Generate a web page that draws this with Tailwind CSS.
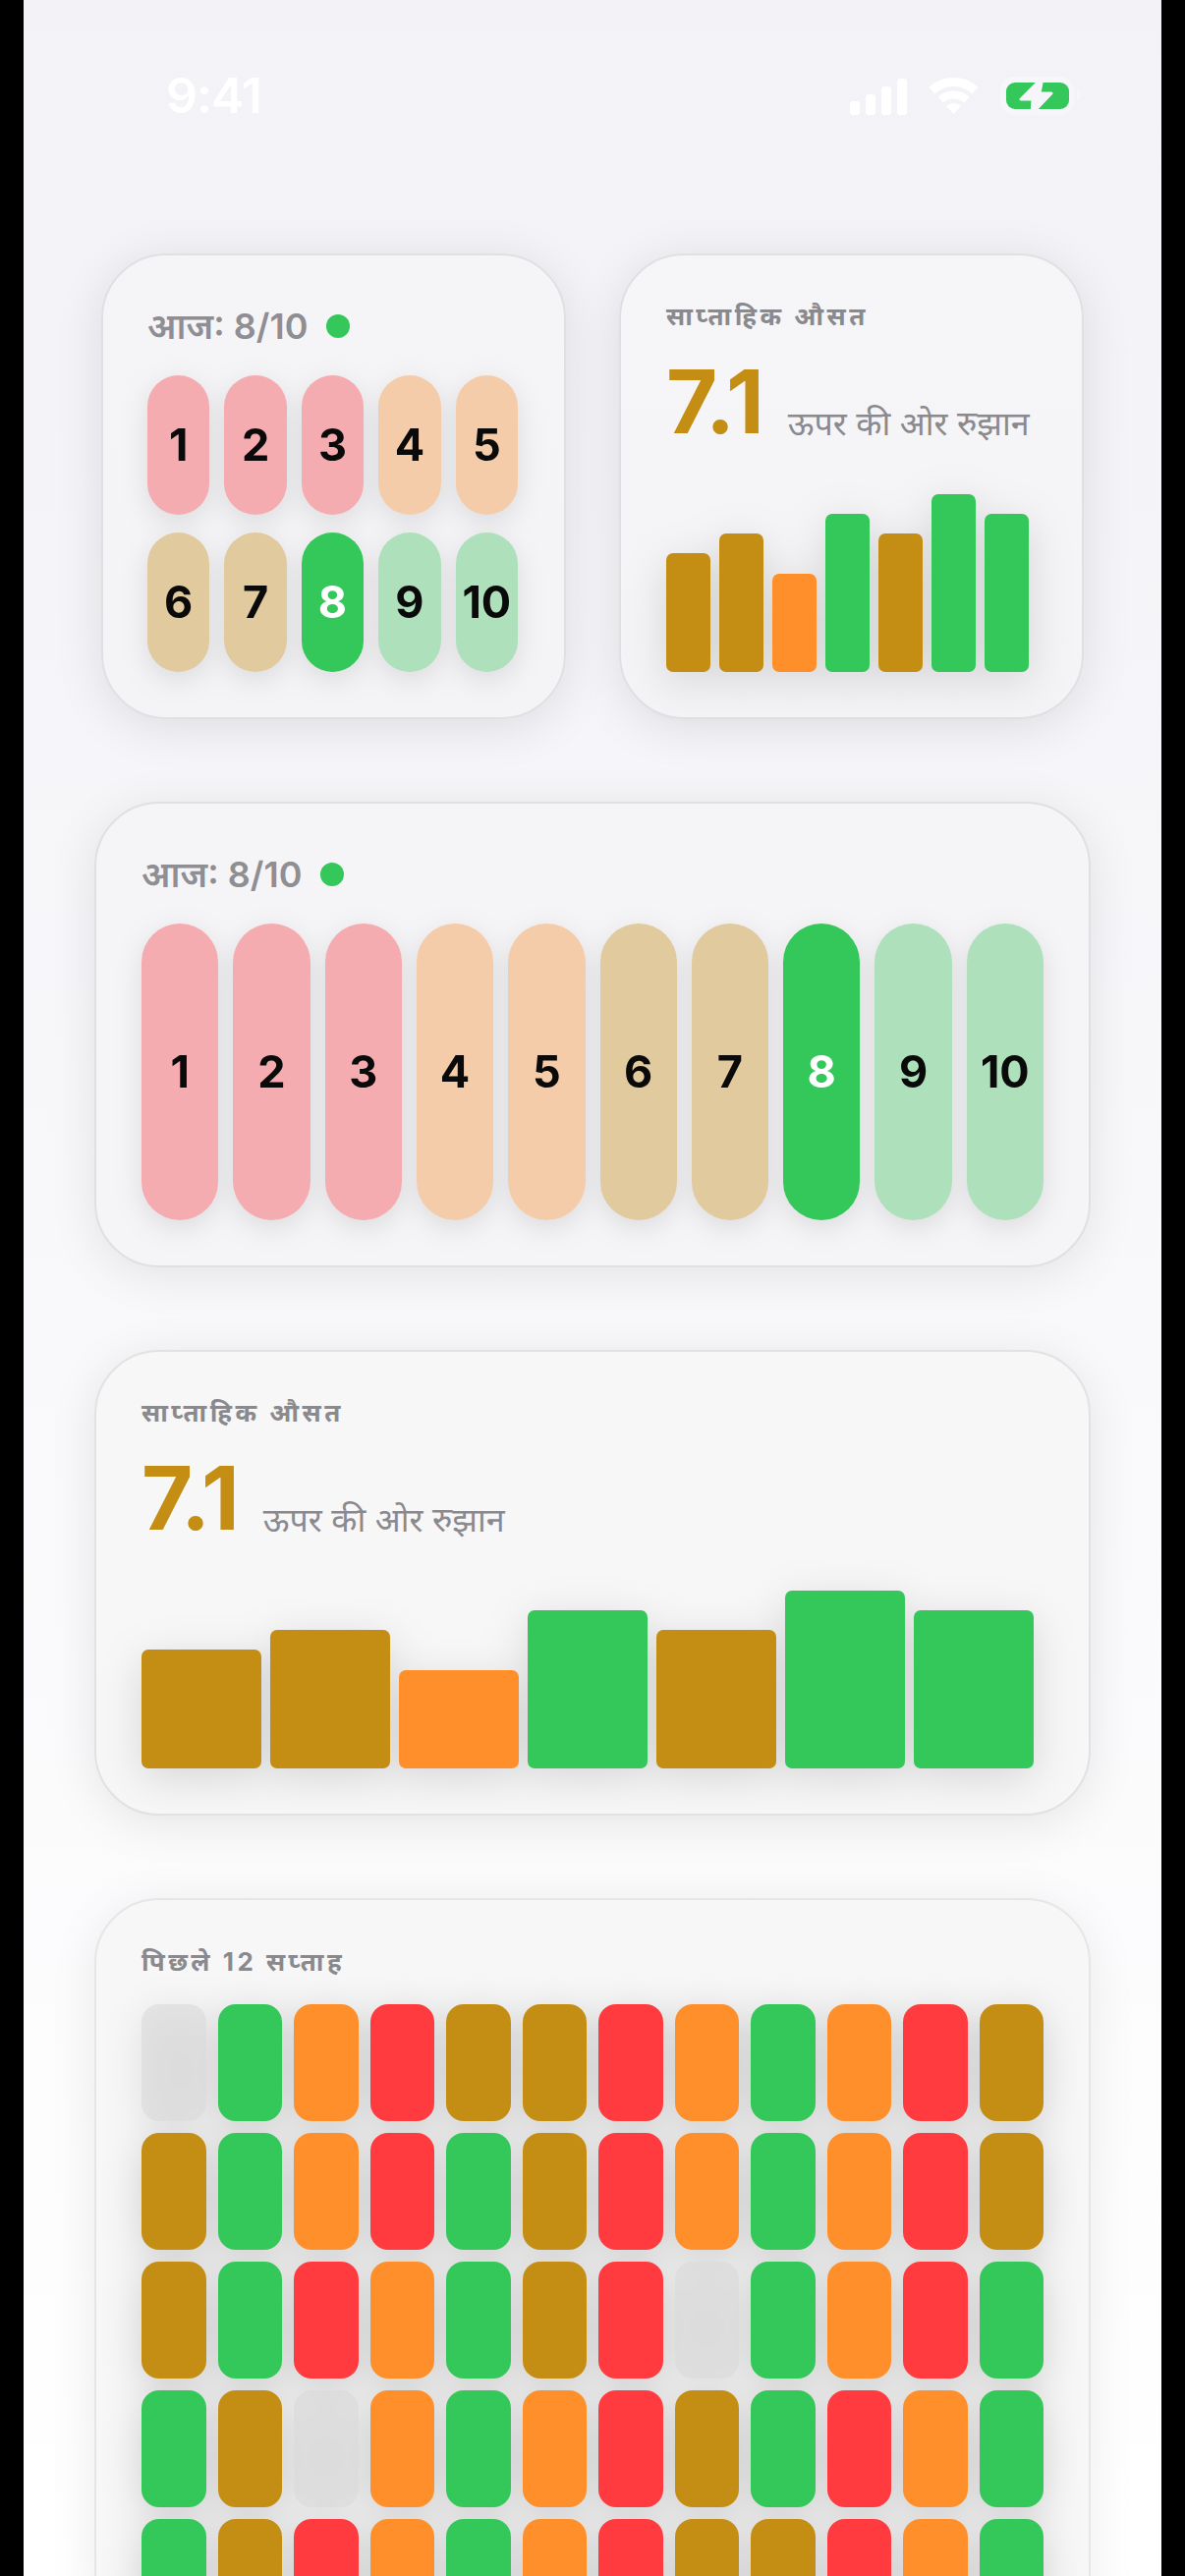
<!DOCTYPE html>
<html lang="hi">
<head>
    <meta charset="UTF-8">
    <meta name="viewport" content="width=device-width, initial-scale=1.0">
    <title>Widgets</title>
    <script src="https://cdn.jsdelivr.net/npm/@tailwindcss/browser@4"></script>
</head>
<body class="bg-black h-[2622px] overflow-hidden font-['Inter','Noto_Sans',sans-serif]">
    <div class="mx-[24px] w-[1158px] h-[2622px] overflow-hidden bg-gradient-to-b from-[#f2f2f7] to-white">

        <!-- Status bar -->
        <div class="h-[258px] flex justify-between items-start pt-[78px] pl-[145px] pr-[82px]">
            <span class="text-white text-[50px] leading-[39px] font-semibold tracking-[-1px]">9:41</span>
            <div class="flex items-start">
                <div class="flex items-end gap-[6px] h-[38px] mt-[1px]">
                    <div class="w-[10px] h-[14px] rounded-[3px] bg-white"></div>
                    <div class="w-[10px] h-[21px] rounded-[3px] bg-white"></div>
                    <div class="w-[10px] h-[29px] rounded-[3px] bg-white"></div>
                    <div class="w-[10px] h-[37px] rounded-[3px] bg-white"></div>
                </div>
                <svg class="ml-[22px] mt-[1px]" width="51" height="37" viewBox="0 0 51 37" fill="none">
                    <path d="M3.34 13.23A32.5 32.5 0 0 1 47.66 13.23" stroke="#fff" stroke-width="9"/>
                    <path d="M12.2 22.74A19.5 19.5 0 0 1 38.8 22.74" stroke="#fff" stroke-width="8"/>
                    <path d="M25.5 37L18 29A11 11 0 0 1 33 29Z" fill="#fff"/>
                </svg>
                <svg class="ml-[22px]" width="82" height="39" viewBox="0 0 82 39" fill="none">
                    <rect width="75" height="39" rx="14" fill="#f7f7fb"/>
                    <rect x="6" y="6" width="64" height="27" rx="9" fill="#34c759"/>
                    <path d="M78 14C80.500 15 82 17 82 19.500C82 22 80.500 24 78 25Z" fill="#f7f7fb"/>
                    <path d="M43 1L21 23H33L32 38L52 17H40Z" fill="#f5f5fa" stroke="#f5f5fa" stroke-width="3" stroke-linejoin="round"/>
                </svg>
            </div>
        </div>

        <!-- Small widgets -->
        <div class="flex justify-between px-[79px]">
            <div class="w-[473px] h-[474px] rounded-[66px] border-2 border-[#e0e0e3] bg-gradient-to-b from-[#f5f5f7] to-[#f4f4f6] shadow-[0_8px_50px_rgba(0,0,0,0.1)] pt-[48px] pl-[45px] pr-[47px]">
                <div class="flex items-center gap-[19px] h-[48px] mb-[26px]">
                    <span class="text-[#8e8e93] text-[36px] font-semibold">आज: 8/10</span>
                    <div class="w-[24px] h-[24px] rounded-full bg-[#34c759]"></div>
                </div>
                <div class="grid grid-cols-5 gap-x-[15px] gap-y-[18px] text-[45px] font-bold text-[#0a0a0a] drop-shadow-[0_8px_14px_rgba(0,0,0,0.1)] *:h-[142px] *:rounded-full *:flex *:items-center *:justify-center">
                    <div class="bg-[#f5acb1]">1</div>
                    <div class="bg-[#f5acb1]">2</div>
                    <div class="bg-[#f5acb1]">3</div>
                    <div class="bg-[#f5cca9]">4</div>
                    <div class="bg-[#f5cca9]">5</div>
                    <div class="bg-[#e0ca9e]">6</div>
                    <div class="bg-[#e0ca9e]">7</div>
                    <div class="bg-[#34c759] text-white">8</div>
                    <div class="bg-[#aee0bb]">9</div>
                    <div class="bg-[#aee0bb]">10</div>
                </div>
            </div>

            <div class="w-[473px] h-[474px] rounded-[66px] border-2 border-[#e0e0e3] bg-gradient-to-b from-[#f6f6f8] to-[#f4f4f6] shadow-[0_8px_50px_rgba(0,0,0,0.1)] pt-[42px] pl-[46px] pb-[46px] flex flex-col">
                <div class="text-[#8a8a8e] text-[26px] leading-[40px] font-bold tracking-[3.500px]">साप्ताहिक औसत</div>
                <div class="flex items-baseline gap-[25px] mt-[17px] h-[100px] leading-[100px]">
                    <span class="text-[#c48d14] text-[90px] font-bold tracking-[-1px]">7.1</span>
                    <span class="text-[#8a8a8e] text-[34px] translate-y-[2px]">ऊपर की ओर रुझान</span>
                </div>
                <div class="mt-auto flex items-end gap-[9px] drop-shadow-[0_10px_22px_rgba(0,0,0,0.13)] *:w-[45px] *:rounded-[7px]">
                    <div class="h-[121px] bg-[#c48d14]"></div>
                    <div class="h-[141px] bg-[#c48d14]"></div>
                    <div class="h-[100px] bg-[#ff8f2a]"></div>
                    <div class="h-[161px] bg-[#34c759]"></div>
                    <div class="h-[141px] bg-[#c48d14]"></div>
                    <div class="h-[181px] bg-[#34c759]"></div>
                    <div class="h-[161px] bg-[#34c759]"></div>
                </div>
            </div>
        </div>

        <!-- Medium: today -->
        <div class="mx-[72px] mt-[84px] h-[474px] rounded-[66px] border-2 border-[#e0e0e3] bg-[#f5f5f7] shadow-[0_8px_50px_rgba(0,0,0,0.09)] pt-[48px] px-[46px]">
            <div class="flex items-center gap-[19px] h-[48px] mb-[26px]">
                <span class="text-[#8e8e93] text-[36px] font-semibold">आज: 8/10</span>
                <div class="w-[24px] h-[24px] rounded-full bg-[#34c759]"></div>
            </div>
            <div class="grid grid-cols-10 gap-x-[15px] text-[45px] font-bold text-[#0a0a0a] drop-shadow-[0_8px_14px_rgba(0,0,0,0.1)] *:h-[302px] *:rounded-full *:flex *:items-center *:justify-center">
                <div class="bg-[#f5acb1]">1</div>
                <div class="bg-[#f5acb1]">2</div>
                <div class="bg-[#f5acb1]">3</div>
                <div class="bg-[#f5cca9]">4</div>
                <div class="bg-[#f5cca9]">5</div>
                <div class="bg-[#e0ca9e]">6</div>
                <div class="bg-[#e0ca9e]">7</div>
                <div class="bg-[#34c759] text-white">8</div>
                <div class="bg-[#aee0bb]">9</div>
                <div class="bg-[#aee0bb]">10</div>
            </div>
        </div>

        <!-- Medium: weekly average -->
        <div class="mx-[72px] mt-[84px] h-[474px] rounded-[66px] border-2 border-[#e2e2e4] bg-[#f7f7f8] shadow-[0_8px_50px_rgba(0,0,0,0.09)] pt-[42px] pl-[46px] pb-[46px] flex flex-col">
            <div class="text-[#8a8a8e] text-[26px] leading-[40px] font-bold tracking-[3.500px]">साप्ताहिक औसत</div>
            <div class="flex items-baseline gap-[25px] mt-[17px] h-[100px] leading-[100px]">
                <span class="text-[#c48d14] text-[90px] font-bold tracking-[-1px]">7.1</span>
                <span class="text-[#8a8a8e] text-[34px] translate-y-[2px]">ऊपर की ओर रुझान</span>
            </div>
            <div class="mt-auto flex items-end gap-[9px] drop-shadow-[0_10px_22px_rgba(0,0,0,0.13)] *:w-[122px] *:rounded-[7px]">
                <div class="h-[121px] bg-[#c48d14]"></div>
                <div class="h-[141px] bg-[#c48d14]"></div>
                <div class="h-[100px] bg-[#ff8f2a]"></div>
                <div class="h-[161px] bg-[#34c759]"></div>
                <div class="h-[141px] bg-[#c48d14]"></div>
                <div class="h-[181px] bg-[#34c759]"></div>
                <div class="h-[161px] bg-[#34c759]"></div>
            </div>
        </div>

        <!-- Last 12 weeks -->
        <div class="mx-[72px] mt-[84px] rounded-[66px] border-2 border-[#e6e6e7] bg-[#f7f7f7] shadow-[0_8px_50px_rgba(0,0,0,0.08)] pt-[43px] px-[46px] pb-[46px]">
            <div class="text-[#8a8a8e] text-[26px] leading-[40px] font-bold tracking-[3.500px] mb-[23px]">पिछले 12 सप्ताह</div>
            <div class="grid grid-cols-12 gap-[12px] drop-shadow-[0_8px_20px_rgba(0,0,0,0.16)] *:h-[119px] *:rounded-[18px]">
                <div class="bg-[#d8d8d8]/60"></div><div class="bg-[#34c759]"></div><div class="bg-[#ff8f2a]"></div><div class="bg-[#ff3b40]"></div><div class="bg-[#c48d14]"></div><div class="bg-[#c48d14]"></div><div class="bg-[#ff3b40]"></div><div class="bg-[#ff8f2a]"></div><div class="bg-[#34c759]"></div><div class="bg-[#ff8f2a]"></div><div class="bg-[#ff3b40]"></div><div class="bg-[#c48d14]"></div>
                <div class="bg-[#c48d14]"></div><div class="bg-[#34c759]"></div><div class="bg-[#ff8f2a]"></div><div class="bg-[#ff3b40]"></div><div class="bg-[#34c759]"></div><div class="bg-[#c48d14]"></div><div class="bg-[#ff3b40]"></div><div class="bg-[#ff8f2a]"></div><div class="bg-[#34c759]"></div><div class="bg-[#ff8f2a]"></div><div class="bg-[#ff3b40]"></div><div class="bg-[#c48d14]"></div>
                <div class="bg-[#c48d14]"></div><div class="bg-[#34c759]"></div><div class="bg-[#ff3b40]"></div><div class="bg-[#ff8f2a]"></div><div class="bg-[#34c759]"></div><div class="bg-[#c48d14]"></div><div class="bg-[#ff3b40]"></div><div class="bg-[#d8d8d8]/60"></div><div class="bg-[#34c759]"></div><div class="bg-[#ff8f2a]"></div><div class="bg-[#ff3b40]"></div><div class="bg-[#34c759]"></div>
                <div class="bg-[#34c759]"></div><div class="bg-[#c48d14]"></div><div class="bg-[#d8d8d8]/60"></div><div class="bg-[#ff8f2a]"></div><div class="bg-[#34c759]"></div><div class="bg-[#ff8f2a]"></div><div class="bg-[#ff3b40]"></div><div class="bg-[#c48d14]"></div><div class="bg-[#34c759]"></div><div class="bg-[#ff3b40]"></div><div class="bg-[#ff8f2a]"></div><div class="bg-[#34c759]"></div>
                <div class="bg-[#34c759]"></div><div class="bg-[#c48d14]"></div><div class="bg-[#ff3b40]"></div><div class="bg-[#ff8f2a]"></div><div class="bg-[#34c759]"></div><div class="bg-[#ff8f2a]"></div><div class="bg-[#ff3b40]"></div><div class="bg-[#c48d14]"></div><div class="bg-[#c48d14]"></div><div class="bg-[#ff3b40]"></div><div class="bg-[#ff8f2a]"></div><div class="bg-[#34c759]"></div>
            </div>
        </div>
    </div>
</body>
</html>
